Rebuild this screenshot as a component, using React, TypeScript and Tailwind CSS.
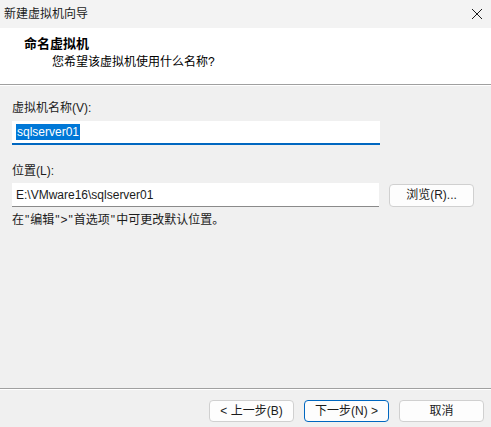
const font = { fontFamily: '"Liberation Sans", "Noto Sans CJK SC", sans-serif' };

function DialogButton({ label, primary }: { label: string; primary?: boolean }) {
  return (
    <button
      className={
        'h-[22px] w-[85px] rounded-[4px] border bg-[#fdfdfd] text-[12px] leading-none text-[#1b1b1b] ' +
        (primary ? 'border-[#0067c0]' : 'border-[#d0d0d0]')
      }
    >
      {label}
    </button>
  );
}

// quotes in the hint line sit a little looser than the default glyph advance
function Q() {
  return <span className="mx-[1px]">"</span>;
}

export default function App() {
  return (
    <div className="flex h-[427px] w-[491px] flex-col bg-[#f0f0f0] text-[#1b1b1b]" style={font}>
      {/* title bar */}
      <div className="flex h-[28px] items-center justify-between bg-[#f3f3f3] pl-[4px] pr-[6px]">
        <span className="text-[12px]">新建虚拟机向导</span>
        <svg width="14" height="14" viewBox="0 0 14 14" className="mr-[1px]">
          <path d="M2 2 L12 12 M12 2 L2 12" stroke="#1b1b1b" strokeWidth="1" />
        </svg>
      </div>

      {/* page header */}
      <div className="flex h-[56px] flex-col bg-white pl-[24px] pt-[7px]">
        <span className="text-[13px] font-bold leading-[18px] text-black">命名虚拟机</span>
        <span className="pl-[28px] text-[12px] leading-[18px] text-black">您希望该虚拟机使用什么名称?</span>
      </div>
      <div className="h-px bg-[#a0a0a0]" />
      <div className="h-px bg-white" />

      {/* body */}
      <div className="flex flex-1 flex-col px-[12px] pt-[14px]">
        <span className="text-[12px] leading-[16px]">虚拟机名称(V):</span>
        <div className="mt-[5px] flex h-[24px] w-[368px] items-center border-b-2 border-[#0067c0] bg-white pl-[4px]">
          <span className="bg-[#0078d7] px-px text-[12px] leading-[16px] text-white">sqlserver01</span>
        </div>

        <span className="mt-[18px] text-[12px] leading-[16px]">位置(L):</span>
        <div className="mt-[4px] flex items-center">
          <div className="flex h-[24px] w-[367px] items-center border-b border-[#8a8a8a] bg-white pl-[4px] text-[12px]">
            E:\VMware16\sqlserver01
          </div>
          <button className="ml-[10px] h-[23px] w-[85px] rounded-[4px] border border-[#d0d0d0] bg-[#fdfdfd] text-[12px] leading-none">
            浏览(R)...
          </button>
        </div>
        <span className="mt-[5px] text-[12px] leading-[16px]">
          在<Q />编辑<Q />&gt;<Q />首选项<Q />中可更改默认位置。
        </span>
      </div>

      {/* footer */}
      <div className="h-px bg-[#a0a0a0]" />
      <div className="h-px bg-white" />
      <div className="flex h-[37px] items-start justify-end gap-[10px] pr-[7px] pt-[10px]">
        <DialogButton label="< 上一步(B)" />
        <DialogButton label="下一步(N) >" primary />
        <DialogButton label="取消" />
      </div>
    </div>
  );
}
